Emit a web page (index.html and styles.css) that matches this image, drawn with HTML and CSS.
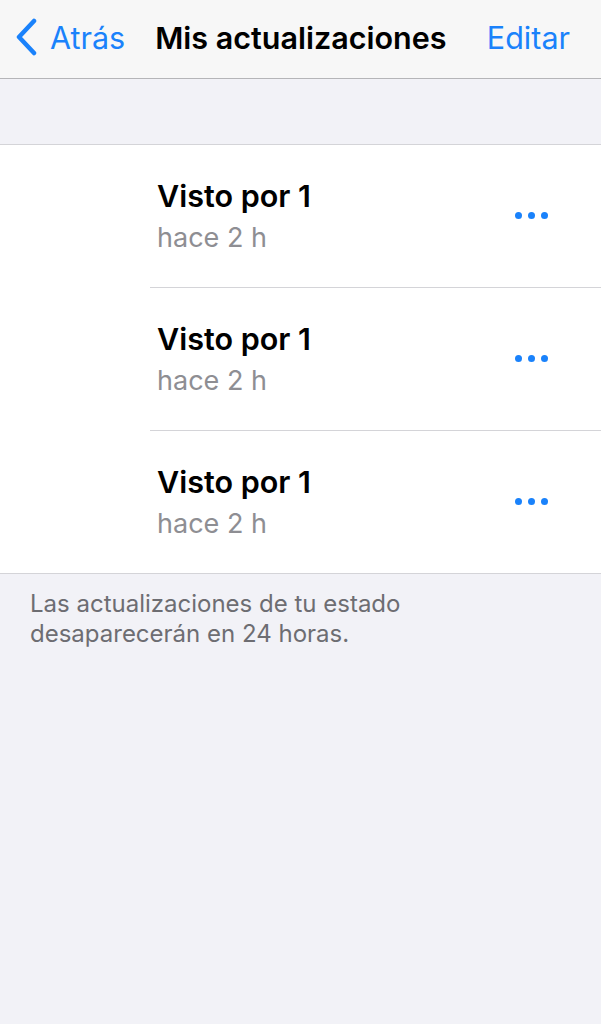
FILE: index.html
```html
<!DOCTYPE html>
<html lang="es">
<head>
  <meta charset="UTF-8">
  <meta name="viewport" content="width=device-width, initial-scale=1.0">
  <title>Mis actualizaciones</title>
  <link rel="stylesheet" href="styles.css">
</head>
<body>
  <header class="navbar">
    <a class="nav-back" href="#">
      <svg class="chevron" width="22" height="38" viewBox="0 0 22 38">
        <path d="M19 3 L4 19 L19 35" fill="none" stroke="#1a82fb" stroke-width="4.5" stroke-linecap="round" stroke-linejoin="round"/>
      </svg>
      <span>Atrás</span>
    </a>
    <h1 class="nav-title">Mis actualizaciones</h1>
    <a class="nav-edit" href="#">Editar</a>
  </header>

  <div class="spacer"></div>

  <ul class="status-list">
    <li class="status-item">
      <div class="status-text">
        <strong>Visto por 1</strong>
        <span>hace 2 h</span>
      </div>
      <button class="more"><i></i><i></i><i></i></button>
    </li>
    <li class="status-item">
      <div class="status-text">
        <strong>Visto por 1</strong>
        <span>hace 2 h</span>
      </div>
      <button class="more"><i></i><i></i><i></i></button>
    </li>
    <li class="status-item">
      <div class="status-text">
        <strong>Visto por 1</strong>
        <span>hace 2 h</span>
      </div>
      <button class="more"><i></i><i></i><i></i></button>
    </li>
  </ul>

  <p class="footer-note">Las actualizaciones de tu estado<br>desaparecerán en 24 horas.</p>
</body>
</html>
```

FILE: styles.css
```css
body {
  font-family: Inter, "Noto Sans", sans-serif;
  background-color: #f2f2f7;
  color: #000;
  margin: 0;
  padding: 0;
  min-height: 1024px;
}
.navbar {
  height: 74px;
  background-color: #f7f7f7;
  border-bottom: 1px solid #b5b5b8;
  display: flex;
  align-items: center;
  padding: 0 31px 4px 15px;
  box-sizing: content-box;
}
.nav-back {
  display: flex;
  align-items: center;
  gap: 13px;
  color: #1a82fb;
  text-decoration: none;
  font-size: 30.5px;
}
.nav-title {
  margin: 0 0 0 30px;
  font-size: 30.5px;
  font-weight: 600;
  flex: 1;
}
.nav-edit {
  color: #1a82fb;
  text-decoration: none;
  font-size: 30.5px;
}
.spacer {
  height: 65px;
  border-bottom: 1px solid #d4d4d8;
}
.status-list {
  list-style: none;
  margin: 0;
  padding: 0 0 0 150px;
  background-color: #fff;
  border-bottom: 1px solid #d4d4d8;
}
.status-item {
  height: 142px;
  display: flex;
  align-items: center;
  justify-content: space-between;
  padding-right: 52px;
  border-bottom: 1px solid #d4d4d8;
}
.status-item:last-child {
  border-bottom: none;
}
.status-text {
  display: flex;
  flex-direction: column;
  padding-left: 7px;
  margin-top: 0;
}
.status-text strong {
  font-size: 30.5px;
  font-weight: 600;
  line-height: 40px;
}
.status-text span {
  font-size: 27px;
  color: #8e8e93;
  line-height: 38px;
  margin-top: 3px;
}
.more {
  display: flex;
  gap: 6px;
  background: none;
  border: none;
  padding: 0 1px 0 0;
  margin-top: -1px;
}
.more i {
  width: 7px;
  height: 7px;
  border-radius: 50%;
  background-color: #1a82fb;
}
.footer-note {
  margin: 0;
  padding: 15px 30px;
  font-size: 24px;
  line-height: 30px;
  color: #6d6d72;
}
```
